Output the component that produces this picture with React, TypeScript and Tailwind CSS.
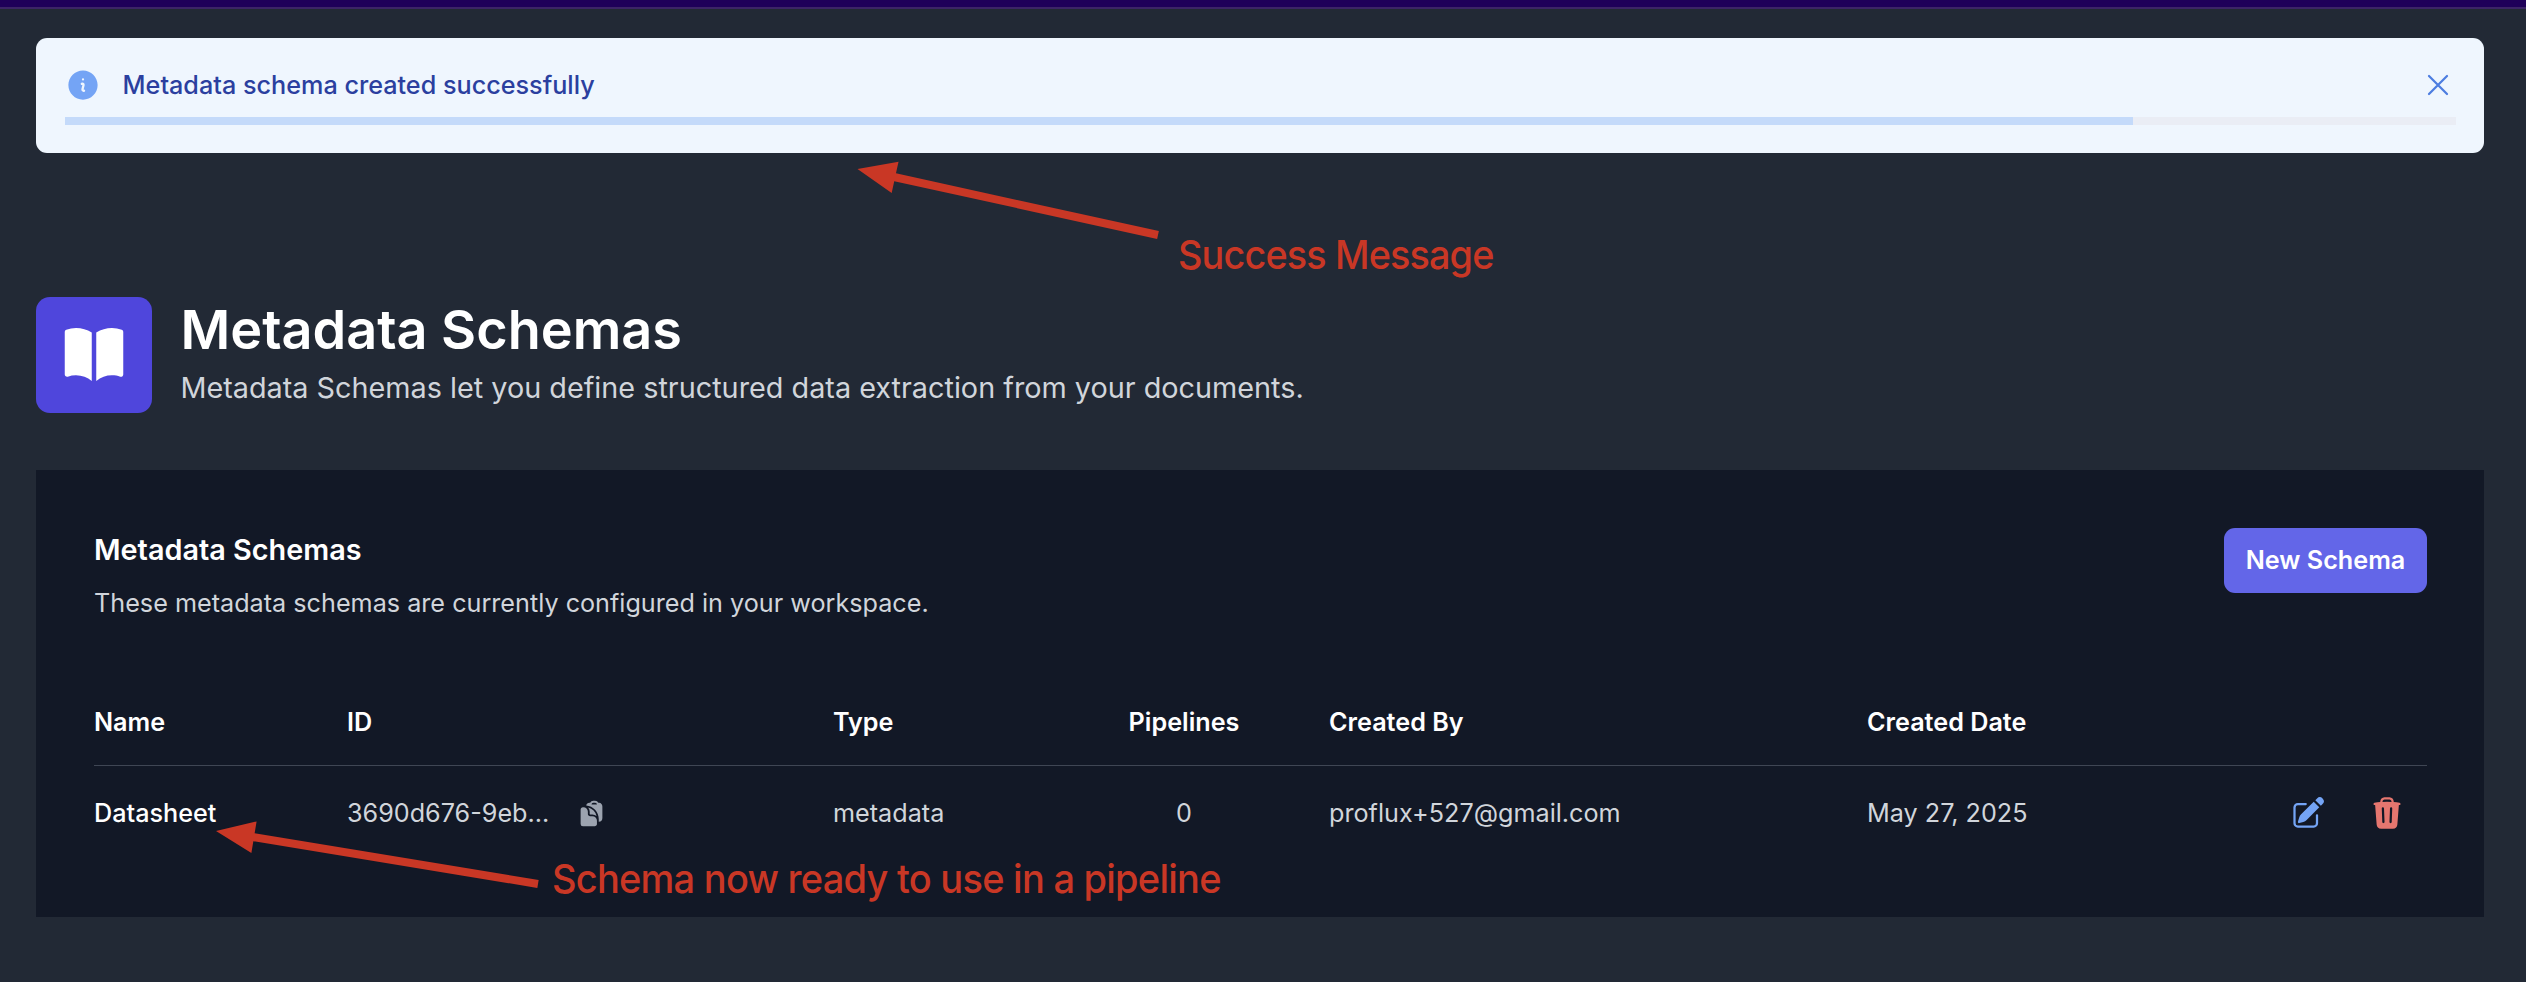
import React from "react";
import {
  HiInformationCircle,
  HiOutlineXMark,
  HiBookOpen,
  HiPencilSquare,
  HiTrash,
  HiClipboardDocument,
} from "react-icons/hi2";

function Arrow({ x1, y1, x2, y2 }: { x1: number; y1: number; x2: number; y2: number }) {
  const len = Math.hypot(x2 - x1, y2 - y1);
  const angle = (Math.atan2(y2 - y1, x2 - x1) * 180) / Math.PI;
  return (
    <g transform={`translate(${x1} ${y1}) rotate(${angle})`} fill="#c93725">
      <path d={`M0 0 L38.5 -16 V-4 H${len} V4 H38.5 V16 Z`} />
    </g>
  );
}

const head = "pb-[25px] text-left font-semibold text-white";

export default function App() {
  return (
    <div className="relative h-[982px] w-[2526px] overflow-hidden bg-[#222935] font-['Inter',sans-serif] text-[25.2px] leading-[36px]">
      <div className="h-[9px] border-b-2 border-[#3c2566] bg-[#1f0059]" />
      <main className="pt-[29px] pr-[42px] pl-[36px]">
        <section className="h-[115px] rounded-[11px] bg-[#eff6fe] pt-[29px] pr-[28px] pl-[29px]">
          <div className="flex h-[36px] items-center">
            <HiInformationCircle className="size-[36px] text-[#74a4f5]" />
            <p className="ml-[21.6px] font-medium text-[#2b3f9f]">Metadata schema created successfully</p>
            <HiOutlineXMark className="ml-auto size-[36px] text-[#4d7de0]" />
          </div>
          <div className="mt-[14px] h-[8px] bg-[#eaedf5]">
            <div className="h-full w-[2068px] bg-[#c4dafa]" />
          </div>
        </section>

        <header className="mt-[144px] flex">
          <div className="flex size-[116px] items-center justify-center rounded-[14px] bg-[#4f46dc]">
            <HiBookOpen className="size-[72px] text-white" />
          </div>
          <div className="ml-[28.4px]">
            <h1 className="mt-[1px] text-[54px] leading-[64px] font-semibold text-white">Metadata Schemas</h1>
            <p className="mt-[4px] text-[28.8px] leading-[43px] text-[#d1d5db]">
              Metadata Schemas let you define structured data extraction from your documents.
            </p>
          </div>
        </header>

        <section className="mt-[57px] h-[447px] bg-[#121826] pt-[58px] pr-[57px] pl-[58px]">
          <div className="flex justify-between">
            <div>
              <h2 className="text-[28.8px] leading-[43px] font-semibold text-white">Metadata Schemas</h2>
              <p className="mt-[14px] text-[#d1d5db]">
                These metadata schemas are currently configured in your workspace.
              </p>
            </div>
            <button className="h-[65px] w-[203px] rounded-[11px] bg-[#6366e8] pb-[2px] font-semibold whitespace-nowrap text-white">
              New Schema
            </button>
          </div>
          <table className="mt-[83px] w-full table-fixed">
            <colgroup>
              <col className="w-[253px]" />
              <col className="w-[486px]" />
              <col className="w-[252px]" />
              <col className="w-[244px]" />
              <col className="w-[538px]" />
              <col className="w-[400px]" />
              <col />
            </colgroup>
            <thead>
              <tr className="border-b border-[#3f4654]">
                <th className={head}>Name</th>
                <th className={head}>ID</th>
                <th className={head}>Type</th>
                <th className="pr-[46px] pb-[25px] text-center font-semibold text-white">Pipelines</th>
                <th className={head}>Created By</th>
                <th className={head}>Created Date</th>
                <th className={head} />
              </tr>
            </thead>
            <tbody>
              <tr className="h-[95px] text-[#d1d5db]">
                <td className="font-medium text-white">Datasheet</td>
                <td>
                  <div className="flex items-center">
                    <span>3690d676-9eb...</span>
                    <HiClipboardDocument className="ml-[28px] size-[29px] text-[#9ca3af]" />
                  </div>
                </td>
                <td>metadata</td>
                <td className="pr-[46px] text-center">0</td>
                <td>proflux+527@gmail.com</td>
                <td>May 27, 2025</td>
                <td>
                  <div className="flex justify-end gap-[43px] pr-[22px]">
                    <HiPencilSquare className="size-[36px] text-[#74a4f5]" />
                    <HiTrash className="size-[36px] text-[#e5766f]" />
                  </div>
                </td>
              </tr>
            </tbody>
          </table>
        </section>
      </main>

      <svg className="pointer-events-none absolute inset-0" width="2526" height="982">
        <Arrow x1={857.5} y1={169} x2={1158} y2={235} />
        <Arrow x1={216} y1={831} x2={538} y2={884} />
      </svg>
      <p className="absolute top-[230px] left-[1178px] origin-left scale-x-[0.945] text-[40px] leading-[50px] font-[450] tracking-[-0.9px] whitespace-nowrap text-[#c93725]">
        Success Message
      </p>
      <p className="absolute top-[854px] left-[552px] origin-left scale-x-[0.95] text-[40px] leading-[50px] font-[450] tracking-[-0.8px] whitespace-nowrap text-[#c93725]">
        Schema now ready to use in a pipeline
      </p>
    </div>
  );
}
